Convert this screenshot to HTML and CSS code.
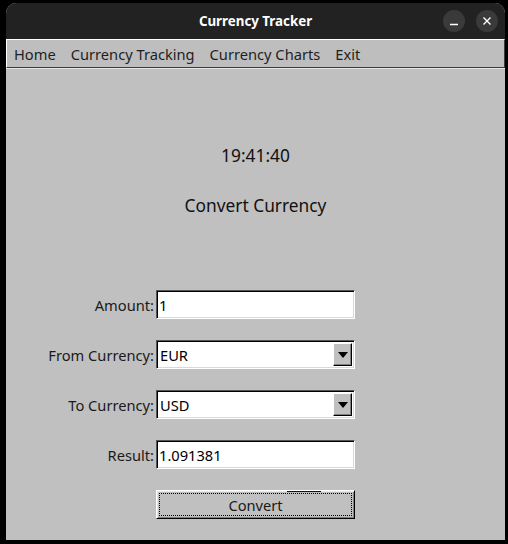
FILE: index.html
```html
<!DOCTYPE html>
<html>
<head>
<meta charset="utf-8">
<link rel="stylesheet" href="styles.css">
</head>
<body>
<div class="desk">
  <div class="window">
    <div class="titlebar">
      <div></div>
      <div class="title">Currency Tracker</div>
      <div class="controls">
        <span class="ctl"><svg width="22" height="22" viewBox="0 0 22 22"><path d="M7 14.5h8" stroke="#fff" stroke-width="1.4"/></svg></span>
        <span class="ctl"><svg width="22" height="22" viewBox="0 0 22 22"><path d="M7.5 7.5l7 7M14.5 7.5l-7 7" stroke="#fff" stroke-width="1.4"/></svg></span>
      </div>
    </div>
    <div class="menubar">
      <span class="menu-item">Home</span>
      <span class="menu-item">Currency Tracking</span>
      <span class="menu-item">Currency Charts</span>
      <span class="menu-item">Exit</span>
    </div>
    <div class="content">
      <div class="clock">19:41:40</div>
      <div class="heading">Convert Currency</div>
      <div class="form">
        <label class="label">Amount:</label>
        <div class="field">1</div>
        <label class="label">From Currency:</label>
        <div class="field combo"><span class="combo-text">EUR</span><span class="arrow"><svg width="10" height="6" viewBox="0 0 10 6"><path d="M0 0h10L5 6z" fill="#000"/></svg></span></div>
        <label class="label">To Currency:</label>
        <div class="field combo"><span class="combo-text">USD</span><span class="arrow"><svg width="10" height="6" viewBox="0 0 10 6"><path d="M0 0h10L5 6z" fill="#000"/></svg></span></div>
        <label class="label">Result:</label>
        <div class="field">1.091381</div>
        <div></div>
        <div class="button"><span class="focus">Convert</span></div>
      </div>
    </div>
  </div>
</div>
</body>
</html>
```

FILE: styles.css
```css
html, body {
  margin: 0;
  padding: 0;
  background: #000;
}
body {
  width: 508px;
  height: 544px;
  overflow: hidden;
  font-family: "Noto Sans", "Open Sans", sans-serif;
}
.desk {
  padding: 3px 0 0 6px;
}
.window {
  width: 499px;
  height: 537px;
  display: flex;
  flex-direction: column;
  background: #c0c0c0;
  border-radius: 10px 10px 0 0;
  overflow: hidden;
}
.titlebar {
  height: 36px;
  flex: none;
  background: #222222;
  display: grid;
  grid-template-columns: 1fr auto 1fr;
  align-items: center;
}
.title {
  color: #ffffff;
  font-weight: bold;
  font-size: 13.33px;
}
.controls {
  display: flex;
  justify-content: flex-end;
  gap: 11px;
  padding-right: 7px;
}
.ctl {
  width: 22px;
  height: 22px;
  border-radius: 50%;
  background: #3a3a3a;
  display: block;
}
.ctl svg { display: block; }
.menubar {
  flex: none;
  height: 27px;
  background: #bebebe;
  border-top: 1px solid #ffffff;
  border-left: 1px solid #ffffff;
  border-bottom: 1px solid #3c3c3c;
  border-right: 1px solid #3c3c3c;
  display: flex;
  align-items: center;
  padding-left: 7px;
  gap: 15px;
  font-size: 14.67px;
  color: #1e1e1e;
}
.content {
  flex: 1;
  border-top: 1px solid #e6e6e6;
  display: flex;
  flex-direction: column;
  color: #111;
}
.clock {
  margin-top: 75px;
  text-align: center;
  font-size: 17.33px;
  line-height: 22px;
}
.heading {
  margin-top: 27px;
  text-align: center;
  font-size: 17.33px;
  line-height: 24px;
}
.form {
  margin-top: 73px;
  display: grid;
  grid-template-columns: 148px 199px;
  grid-auto-rows: 29px;
  column-gap: 2px;
  row-gap: 21px;
  font-size: 14.67px;
}
.label {
  justify-self: end;
  align-self: center;
  color: #1a1a1a;
}
.field {
  box-sizing: border-box;
  background: #ffffff;
  border-style: solid;
  border-width: 1px;
  border-color: #555555 #ffffff #ffffff #555555;
  box-shadow: inset 1px 1px 0 #000, inset -1px -1px 0 #d9d9d9;
  padding-left: 2px;
  display: flex;
  align-items: center;
  color: #000;
}
.combo {
  padding-left: 3px;
  padding-right: 2px;
}
.combo-text {
  flex: 1;
}
.arrow {
  width: 19px;
  height: 23px;
  box-sizing: border-box;
  background: #c0c0c0;
  border-style: solid;
  border-width: 1px;
  border-color: #ffffff #000000 #000000 #ffffff;
  box-shadow: inset -1px -1px 0 #808080;
  display: flex;
  align-items: center;
  justify-content: center;
}
.arrow svg { display: block; }
.button {
  position: relative;
  box-sizing: border-box;
  background: #c0c0c0;
  border-style: solid;
  border-width: 1px;
  border-color: #ffffff #000000 #000000 #ffffff;
  box-shadow: inset 1px 1px 0 #e6e6e6, inset -1px -1px 0 #808080;
  padding: 2px;
  display: flex;
}
.button::after {
  content: "";
  position: absolute;
  top: 0;
  left: 130px;
  width: 34px;
  height: 1px;
  background: #111;
}
.focus {
  flex: 1;
  border: 1px dotted #000;
  display: flex;
  align-items: center;
  justify-content: center;
  color: #1a1a1a;
}
```
